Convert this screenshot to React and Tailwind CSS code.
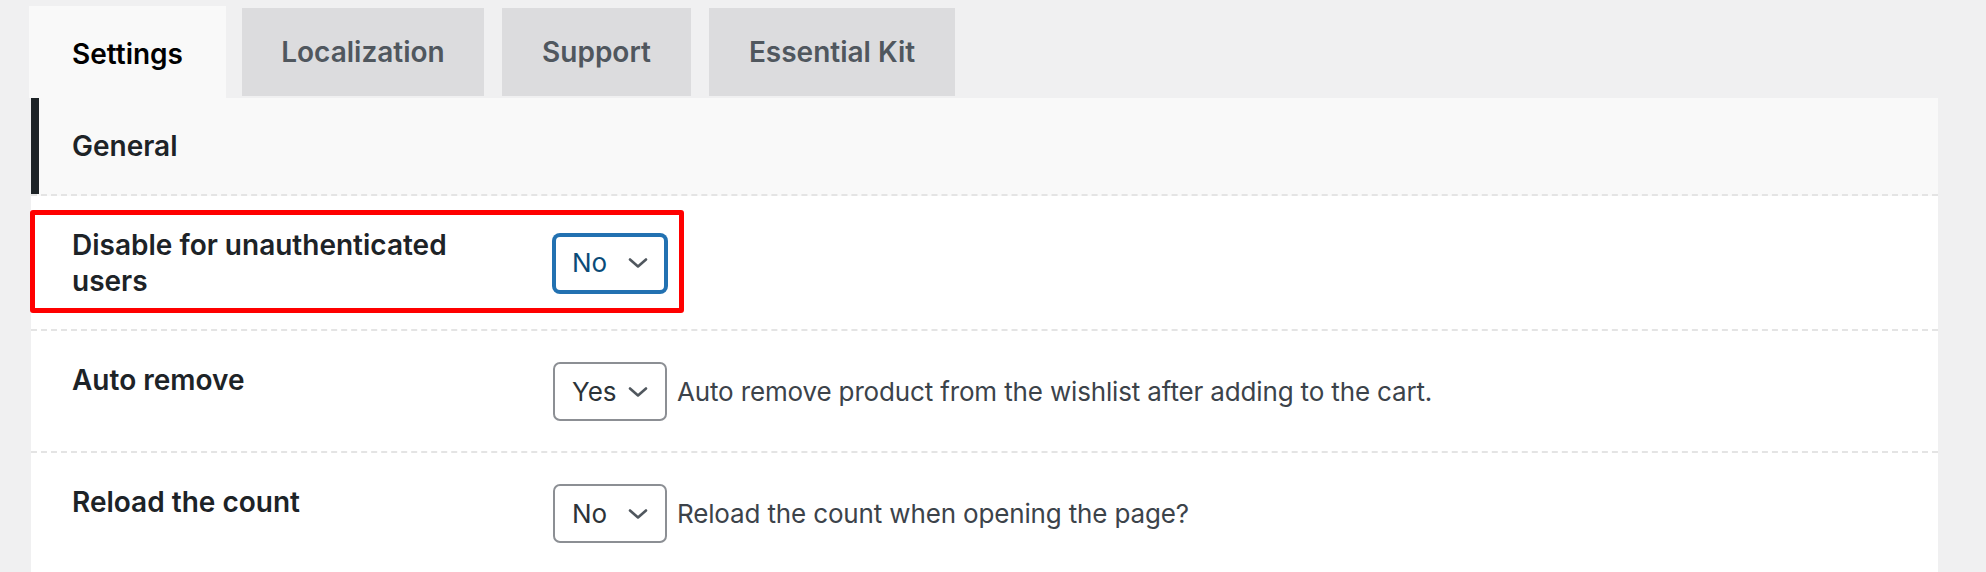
import React from "react";

const tabs = [
  { label: "Settings", active: true, w: "w-[197px]", ml: "" },
  { label: "Localization", active: false, w: "w-[242px]", ml: "ml-[16px]" },
  { label: "Support", active: false, w: "w-[189px]", ml: "ml-[18px]" },
  { label: "Essential Kit", active: false, w: "w-[246px]", ml: "ml-[18px]" },
];

const Chevron = ({ className }) => (
  <svg viewBox="0 0 20 10" className={className} fill="none">
    <path d="M2 1.5 L10 8.5 L18 1.5" stroke="#50575e" strokeWidth="2.6" strokeLinecap="round" strokeLinejoin="round" />
  </svg>
);

const Select = ({ value, focused }) => (
  <div
    className={
      focused
        ? "flex h-[59px] w-[114px] items-center justify-between rounded-[7px] border-[3px] border-[#2271b1] bg-white pl-[16px] pr-[16px] shadow-[0_0_0_1px_#2271b1]"
        : "flex h-[59px] w-[114px] items-center justify-between rounded-[7px] border-2 border-[#8c8f94] bg-white pl-[17px] pr-[17px]"
    }
  >
    <span className={focused ? "text-[26px] leading-none text-[#0a4b78]" : "text-[26px] leading-none text-[#2c3338]"}>
      {value}
    </span>
    <Chevron className="h-[10px] w-[20px]" />
  </div>
);

const Row = ({ label, value, focused, description }) => (
  <div className="flex border-b-2 border-dashed border-[#e4e4e4] pb-[30px] pl-[41px] pt-[31px]">
    <div className="w-[481px] shrink-0 pr-[81px] text-[28px] font-semibold leading-[36px] text-[#1d2327]">
      {label}
    </div>
    <div className="flex items-center self-center">
      <Select value={value} focused={focused} />
      {description && (
        <span className="ml-[10px] text-[26px] leading-none tracking-[-0.15px] text-[#3c434a]">{description}</span>
      )}
    </div>
  </div>
);

export default function App() {
  return (
    <div
      className="relative min-h-screen bg-[#f0f0f1] pl-[29px] pr-[48px] pt-[6px]"
      style={{ fontFamily: "Inter, 'Noto Sans', 'Liberation Sans', sans-serif" }}
    >
      {/* tab bar */}
      <div className="flex h-[92px] items-start">
        {tabs.map((t) =>
          t.active ? (
            <div
              key={t.label}
              className={`${t.w} ${t.ml} flex h-[92px] items-center justify-center bg-[#f9f9f9] pt-[4px] text-[28px] font-semibold text-black`}
            >
              {t.label}
            </div>
          ) : (
            <div
              key={t.label}
              className={`${t.w} ${t.ml} mt-[2px] flex h-[88px] items-center justify-center bg-[#dcdcde] text-[28px] font-semibold text-[#50575e]`}
            >
              {t.label}
            </div>
          )
        )}
      </div>

      {/* settings panel */}
      <div className="ml-[2px] bg-white">
        <div className="border-b-2 border-dashed border-[#e4e4e4] bg-[#f9f9f9]">
          <div className="flex h-[96px] items-center">
            <div className="h-full w-[8px] bg-[#1d2327]" />
            <span className="pl-[33px] text-[28px] font-semibold text-[#1d2327]">General</span>
          </div>
        </div>
        <Row label="Disable for unauthenticated users" value="No" focused />
        <Row
          label="Auto remove"
          value="Yes"
          description="Auto remove product from the wishlist after adding to the cart."
        />
        <Row label="Reload the count" value="No" description="Reload the count when opening the page?" />
      </div>

      {/* highlight annotation */}
      <div className="pointer-events-none absolute left-[30px] top-[210px] h-[103px] w-[654px] rounded-[3px] border-[5px] border-[#ff0000]" />
    </div>
  );
}
